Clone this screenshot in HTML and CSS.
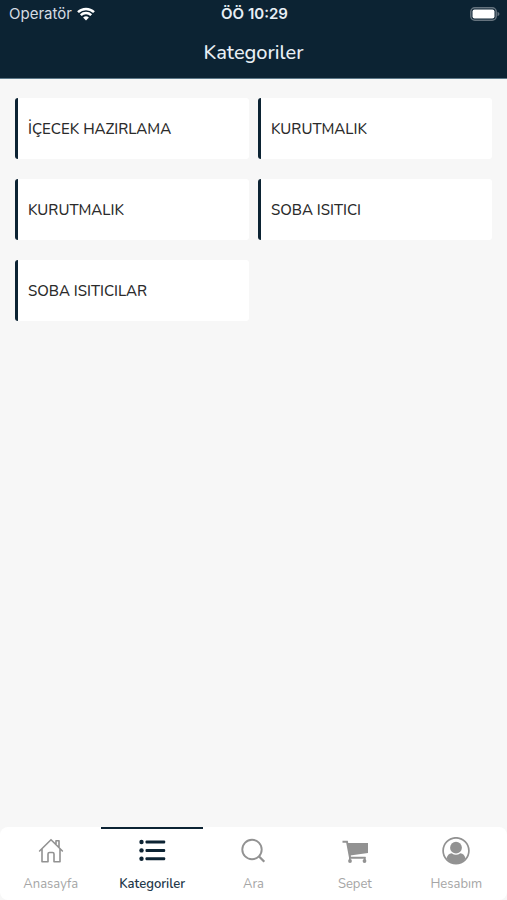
FILE: index.html
```html
<!DOCTYPE html>
<html lang="tr">
<head>
<meta charset="utf-8">
<meta name="viewport" content="width=device-width, initial-scale=1">
<title>Kategoriler</title>
<link rel="stylesheet" href="styles.css">
</head>
<body>
<div class="app">
  <header class="header">
    <div class="status">
      <div class="carrier">
        <span>Operatör</span>
        <svg class="wifi" viewBox="0 0 18 14" aria-hidden="true">
          <path d="M1 5.2a11.4 11.4 0 0 1 16 0M3.8 8.2a7.4 7.4 0 0 1 10.4 0" fill="none" stroke="currentColor" stroke-width="2.5"/>
          <path d="M9 13.5 6.1 10.6a4.1 4.1 0 0 1 5.8 0z" fill="currentColor"/>
        </svg>
      </div>
      <div class="time">ÖÖ 10:29</div>
      <svg class="battery" viewBox="0 0 30 14" aria-hidden="true">
        <rect x=".8" y=".8" width="25.4" height="12.4" rx="4" fill="none" stroke="#65737e" stroke-width="1.5"/>
        <rect x="2.5" y="2.5" width="22" height="9" rx="2" fill="#fff"/>
        <path d="M27.5 4.8v4.4q2-.8 2-2.2t-2-2.2z" fill="#65737e"/>
      </svg>
    </div>
    <h1 class="title">Kategoriler</h1>
  </header>

  <main class="content">
    <div class="grid">
      <a class="card" href="#">İÇECEK HAZIRLAMA</a>
      <a class="card" href="#">KURUTMALIK</a>
      <a class="card" href="#">KURUTMALIK</a>
      <a class="card" href="#">SOBA ISITICI</a>
      <a class="card" href="#">SOBA ISITICILAR</a>
    </div>
  </main>

  <nav class="tabs">
    <a class="tab" href="#">
      <svg class="icon" viewBox="0 0 28 28" fill="none" stroke="currentColor" stroke-width="1.6" stroke-linejoin="round" stroke-linecap="round" aria-hidden="true">
        <path d="M2.6 14 14 2.7 25.4 14M5 12v12.7h6V17q0-1.5 1.5-1.5h3Q17 15.5 17 17v7.7h6V12M19 7V3.8h3v6.400"/>
      </svg>
      <span>Anasayfa</span>
    </a>
    <a class="tab active" href="#" aria-current="page">
      <svg class="icon" viewBox="0 0 28 28" fill="currentColor" aria-hidden="true">
        <circle cx="3.500" cy="5" r="2.200"/><circle cx="3.500" cy="13.400" r="2.200"/><circle cx="3.500" cy="21.800" r="2.200"/>
        <rect x="7.500" y="3.500" width="19.700" height="3" rx="1"/><rect x="7.500" y="11.900" width="19.700" height="3" rx="1"/><rect x="7.500" y="20.300" width="19.700" height="3" rx="1"/>
      </svg>
      <span>Kategoriler</span>
    </a>
    <a class="tab" href="#">
      <svg class="icon" viewBox="0 0 28 28" fill="none" stroke="currentColor" aria-hidden="true">
        <circle cx="13" cy="12.500" r="9.700" stroke-width="1.900"/>
        <path d="M19.800 19.300 25.300 24.800" stroke-width="2.300"/>
      </svg>
      <span>Ara</span>
    </a>
    <a class="tab" href="#">
      <svg class="icon" viewBox="0 0 28 28" fill="none" stroke="currentColor" aria-hidden="true">
        <path d="M1.500 4.800h4.500L9 20.800h15.500" stroke-width="1.900"/>
        <path d="M6.500 6H27v10L9 18.500z" fill="currentColor" stroke="none"/>
        <path d="M8.800 18v6M23.800 20v4" stroke-width="1.600"/>
        <circle cx="9" cy="24" r="1.900" fill="currentColor" stroke="none"/><circle cx="23.500" cy="24" r="1.900" fill="currentColor" stroke="none"/>
      </svg>
      <span>Sepet</span>
    </a>
    <a class="tab" href="#">
      <svg class="icon" viewBox="0 0 28 28" aria-hidden="true">
        <circle cx="14" cy="13.700" r="12.900" fill="none" stroke="currentColor" stroke-width="1.700"/>
        <circle cx="14" cy="10.700" r="5.900" fill="currentColor"/>
        <path d="M4.500 21.500q1-4.800 5.200-5.300 4.300 3 8.600 0 4.200.5 5.200 5.300-4 5.200-9.500 5.200t-9.500-5.200z" fill="currentColor"/>
      </svg>
      <span>Hesabım</span>
    </a>
  </nav>
</div>
</body>
</html>
```
FILE: styles.css
```css
* {
  box-sizing: border-box;
}

body {
  margin: 0;
  background: #f7f7f7;
  color: #2b2b2b;
  font-family: Nunito, "Noto Sans", sans-serif;
}

a {
  color: inherit;
  text-decoration: none;
}

.app {
  display: flex;
  flex-direction: column;
  min-height: 100vh;
}

.header {
  padding-bottom: 12px;
  border-bottom: 1px solid #5d7888;
  background: #0c2333;
  color: #e8eff5;
}

.status {
  display: grid;
  grid-template-columns: 1fr auto 1fr;
  align-items: center;
  height: 27px;
  padding: 0 7px 0 9px;
  font-family: Inter, sans-serif;
  font-size: 15px;
}

.carrier {
  display: flex;
  align-items: center;
  gap: 5px;
  color: #d5dce2;
}

.wifi {
  width: 18px;
  height: 14px;
  color: #fff;
}

.time {
  font-weight: 600;
}

.battery {
  justify-self: end;
  width: 30px;
  height: 14px;
}

.title {
  margin: 0;
  padding-top: 12px;
  font-size: 20px;
  font-weight: 500;
  line-height: 27px;
  text-align: center;
}

.content {
  flex: 1;
  padding: 19px 15px;
}

.grid {
  display: grid;
  grid-template-columns: 1fr 1fr;
  gap: 20px 9px;
}

.card {
  display: flex;
  align-items: center;
  min-height: 61px;
  padding: 0 10px;
  border-left: 3px solid #0c2333;
  border-radius: 3px;
  background: #fff;
  font-size: 15px;
  font-weight: 500;
}

.tabs {
  display: grid;
  grid-template-columns: repeat(5, 1fr);
  border-radius: 8px;
  background: #fff;
  color: #929292;
}

.tab {
  display: flex;
  flex-direction: column;
  align-items: center;
  gap: 10px;
  padding: 8px 0 6px;
  border-top: 2px solid transparent;
  font-size: 13px;
  line-height: 19px;
}

.tab span {
  color: #a5a5a5;
}

.tab.active {
  border-top-color: #0c2333;
  color: #0c2333;
}

.tab.active span {
  color: #24384a;
  font-weight: 600;
}

.icon {
  width: 28px;
  height: 28px;
}
```
